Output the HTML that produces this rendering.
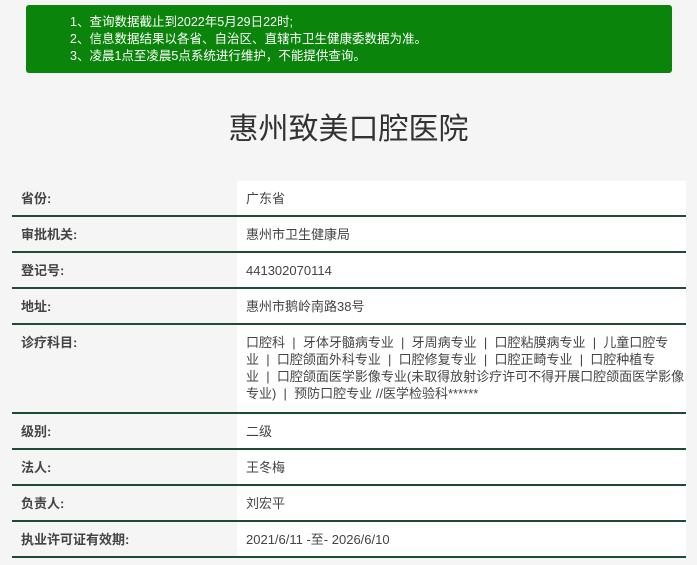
<!DOCTYPE html>
<html><head><meta charset="utf-8"><style>
body{margin:0;width:697px;height:565px;background:#f4f5f4;font-family:"Liberation Sans","Noto Sans CJK SC",sans-serif;overflow:hidden;position:relative}
.notice{position:absolute;left:26px;top:5px;width:646px;height:68px;background:#0a840a;border-radius:3px;color:#fff;font-size:12.5px;line-height:17px;box-sizing:border-box;padding:9px 0 0 44px}
h1{position:absolute;left:0;width:697px;top:108px;margin:0;text-align:center;font-weight:normal;font-size:30px;color:#333;line-height:44px}
table{position:absolute;left:12px;top:181px;width:674px;border-collapse:collapse;font-size:13px;color:#333;table-layout:fixed}
td{border-bottom:2px solid #1f4a34;vertical-align:top;padding:9px 8px 8px 9px;line-height:17px}
td.l{font-weight:bold;color:#444;background:#f4f5f4}
td.r{background:#fff;color:#444}
</style></head><body>
<div class="notice">1、查询数据截止到2022年5月29日22时;<br>2、信息数据结果以各省、自治区、直辖市卫生健康委数据为准。<br>3、凌晨1点至凌晨5点系统进行维护，不能提供查询。</div>
<h1>惠州致美口腔医院</h1>
<table>
<colgroup><col style="width:225px"><col style="width:449px"></colgroup>
<tr><td class="l">省份:</td><td class="r">广东省</td></tr>
<tr><td class="l">审批机关:</td><td class="r">惠州市卫生健康局</td></tr>
<tr><td class="l">登记号:</td><td class="r">441302070114</td></tr>
<tr><td class="l">地址:</td><td class="r">惠州市鹅岭南路38号</td></tr>
<tr><td class="l">诊疗科目:</td><td class="r" style="padding-bottom:10px;white-space:nowrap;overflow:hidden">口腔科 &nbsp;|&nbsp; 牙体牙髓病专业 &nbsp;|&nbsp; 牙周病专业 &nbsp;|&nbsp; 口腔粘膜病专业 &nbsp;|&nbsp; 儿童口腔专<br>业 &nbsp;|&nbsp; 口腔颌面外科专业 &nbsp;|&nbsp; 口腔修复专业 &nbsp;|&nbsp; 口腔正畸专业 &nbsp;|&nbsp; 口腔种植专<br>业 &nbsp;|&nbsp; 口腔颌面医学影像专业(未取得放射诊疗许可不得开展口腔颌面医学影像<br>专业) &nbsp;|&nbsp; 预防口腔专业 //医学检验科******</td></tr>
<tr><td class="l">级别:</td><td class="r">二级</td></tr>
<tr><td class="l">法人:</td><td class="r">王冬梅</td></tr>
<tr><td class="l">负责人:</td><td class="r">刘宏平</td></tr>
<tr><td class="l">执业许可证有效期:</td><td class="r">2021/6/11 -至- 2026/6/10</td></tr>
</table>
</body></html>
